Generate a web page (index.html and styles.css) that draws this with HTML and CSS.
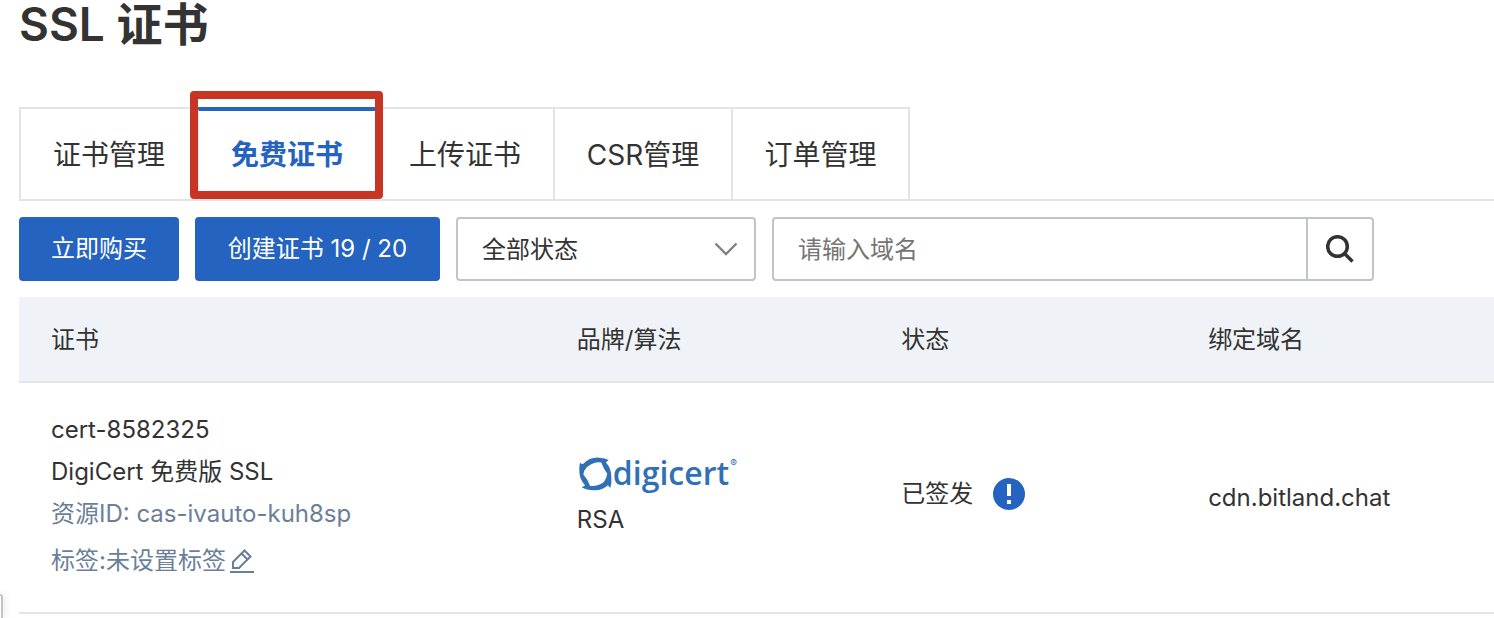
FILE: index.html
```html
<!DOCTYPE html>
<html lang="zh-CN">
<head>
<meta charset="utf-8">
<title>SSL 证书</title>
<link rel="stylesheet" href="styles.css">
</head>
<body>
<main class="page">
  <h1 class="title">SSL 证书</h1>

  <nav class="tabs" aria-label="证书导航">
    <a class="tab" href="#manage">证书管理</a>
    <a class="tab tab-active" href="#free" aria-current="page">免费证书<span class="tab-mark"></span></a>
    <a class="tab" href="#upload">上传证书</a>
    <a class="tab" href="#csr">CSR管理</a>
    <a class="tab" href="#orders">订单管理</a>
  </nav>

  <form class="toolbar">
    <button class="btn" type="button">立即购买</button>
    <button class="btn btn-create" type="button">创建证书 19 / 20</button>
    <div class="select-wrap">
      <select class="select" aria-label="状态"><option>全部状态</option></select>
      <svg class="select-arrow" viewBox="0 0 24 14" aria-hidden="true"><path d="M1.5 1.5 12 12 22.500 1.500"/></svg>
    </div>
    <div class="search">
      <input class="search-input" type="text" aria-label="域名" placeholder="请输入域名">
      <button class="search-btn" type="button" aria-label="搜索">
        <svg class="search-icon" viewBox="0 0 28 28" aria-hidden="true"><circle cx="11.500" cy="11.500" r="9.800"/><path d="M18.500 18.500 26.500 26.500"/></svg>
      </button>
    </div>
  </form>

  <table class="table">
    <thead>
      <tr>
        <th class="col-cert">证书</th>
        <th class="col-brand">品牌/算法</th>
        <th class="col-status">状态</th>
        <th>绑定域名</th>
      </tr>
    </thead>
    <tbody>
      <tr>
        <td>
          <div class="line">cert-8582325</div>
          <div class="line">DigiCert 免费版 SSL</div>
          <div class="line muted">资源ID: cas-ivauto-kuh8sp</div>
          <div class="tags muted">标签:未设置标签<button class="edit" type="button" aria-label="编辑标签"><svg class="edit-icon" viewBox="0 0 24 24" aria-hidden="true"><path d="M3 19V13L14.500 1.500 20.500 7.500 9 19ZM11.500 4.500 17.500 10.500"/><path d="M0 23H24"/></svg></button></div>
        </td>
        <td>
          <div class="logo">
            <svg class="logo-mark" viewBox="0 0 98 101" aria-hidden="true"><path fill-rule="evenodd" d="M3 16Q7 22 13 20Q32 0 60 2Q78 3 88 9L80 16Q97 34 96 60Q98 78 93 92L86 84Q70 99 48 99Q24 100 8 90L18 85Q2 65 1 45Q0 28 3 16ZM24 30Q44 13 66 16Q74 36 84 50Q82 64 74 74Q56 88 33 86Q27 68 13 52Q14 40 24 30Z"/></svg>
            <span class="logo-text">digicert</span><span class="logo-reg">®</span>
          </div>
          <div class="line">RSA</div>
        </td>
        <td>
          <div class="status">已签发
            <svg class="status-icon" viewBox="0 0 32 32" role="img" aria-label="提示"><circle cx="16" cy="16" r="16"/><path d="M14 6h4v12h-4zM14 22h4v4h-4z"/></svg>
          </div>
        </td>
        <td>cdn.bitland.chat</td>
      </tr>
    </tbody>
  </table>
</main>
<div class="side-handle"></div>
</body>
</html>
```
FILE: styles.css
```css
* { box-sizing: border-box; }

body {
  margin: 0;
  background: #fff;
  color: #333;
  font: 24px/42px Inter, "Noto Sans CJK SC", sans-serif;
}

button, input, select { font: inherit; color: inherit; margin: 0; }

.page { padding-left: 19px; }

.title {
  margin: 0 0 59px;
  font-size: 46px;
  line-height: 48px;
  font-weight: 600;
}

.tabs {
  display: flex;
  border-bottom: 2px solid #e3e4e6;
}

.tab {
  position: relative;
  width: 178px;
  height: 92px;
  border: 2px solid #e3e4e6;
  border-width: 2px 0 0 2px;
  color: #333;
  font-size: 28px;
  line-height: 92px;
  text-align: center;
  text-decoration: none;
}

.tab:last-child { width: 179px; border-right-width: 2px; }

.tab-active {
  border-top: 4px solid #2563c0;
  color: #2563c0;
  font-weight: 600;
  line-height: 88px;
}

/* Highlight frame around the active tab */
.tab-mark {
  position: absolute;
  inset: -20px -8px 0 -9px;
  z-index: 1;
  border: 8px solid #c93524;
  border-radius: 4px;
}

.toolbar {
  display: flex;
  gap: 16px;
  margin: 16px 0;
}

.btn {
  height: 64px;
  padding: 0 32px;
  border: 0;
  border-radius: 4px;
  background: #2563c0;
  color: #fff;
  white-space: nowrap;
}

.btn-create { min-width: 245px; }

.select-wrap { position: relative; width: 300px; }

.select {
  width: 100%;
  height: 64px;
  padding: 2px 24px 0;
  border: 2px solid #c1c4c9;
  border-radius: 4px;
  background: #fff;
  appearance: none;
}

.select-arrow {
  position: absolute;
  top: 25px;
  right: 18px;
  width: 24px;
  height: 14px;
  fill: none;
  stroke: #808080;
  stroke-width: 2.400;
  pointer-events: none;
}

.search {
  display: flex;
  width: 602px;
  height: 64px;
  border: 2px solid #c1c4c9;
  border-radius: 4px;
}

.search-input {
  flex: 1;
  min-width: 0;
  padding: 2px 24px 0;
  border: 0;
  background: none;
}

.search-input::placeholder { color: #757575; opacity: 1; }

.search-btn {
  display: grid;
  place-items: center;
  width: 66px;
  padding: 0;
  border: 0;
  border-left: 2px solid #c1c4c9;
  background: none;
}

.search-icon {
  width: 28px;
  height: 28px;
  fill: none;
  stroke: #333;
  stroke-width: 3.500;
}

.table {
  width: 100%;
  table-layout: fixed;
  border-collapse: separate;
  border-spacing: 0;
}

.table th, .table td {
  padding: 0 32px;
  border-bottom: 2px solid #e3e4e8;
  text-align: left;
  font-weight: 400;
  vertical-align: middle;
}

.table th { height: 86px; padding-top: 2px; background: #eff3f8; }
.table td { height: 231px; }

.col-cert { width: 35.650%; }
.col-brand { width: 22%; }
.col-status { width: 20.800%; }

.muted { color: #6b7f99; }

.tags {
  display: flex;
  align-items: center;
  gap: 4px;
  height: 52px;
}

.edit {
  display: flex;
  padding: 0;
  border: 0;
  background: none;
}

.edit-icon {
  width: 24px;
  height: 24px;
  fill: none;
  stroke: currentColor;
  stroke-width: 2;
}

.logo {
  display: flex;
  gap: 1px;
  height: 44px;
  padding-left: 2px;
  color: #2f70b7;
}

.logo-mark { width: 33px; height: 34px; margin-top: 2px; fill: currentColor; }

.logo-text {
  font: 600 32px/36px "Open Sans", sans-serif;
}

.logo-reg {
  font-size: 10px;
  line-height: 16px;
}

.status {
  display: flex;
  align-items: center;
  gap: 20px;
  padding-bottom: 8px;
}

.status-icon { width: 32px; height: 32px; }
.status-icon circle { fill: #2563c0; }
.status-icon path { fill: #fff; }

.side-handle {
  position: fixed;
  left: 0;
  bottom: 0;
  width: 3px;
  height: 24px;
  border: 2px solid #c1c4c9;
  border-width: 2px 2px 0 0;
  border-top-right-radius: 4px;
  box-shadow: 0 0 8px rgba(0, 0, 0, 0.2);
}
```
